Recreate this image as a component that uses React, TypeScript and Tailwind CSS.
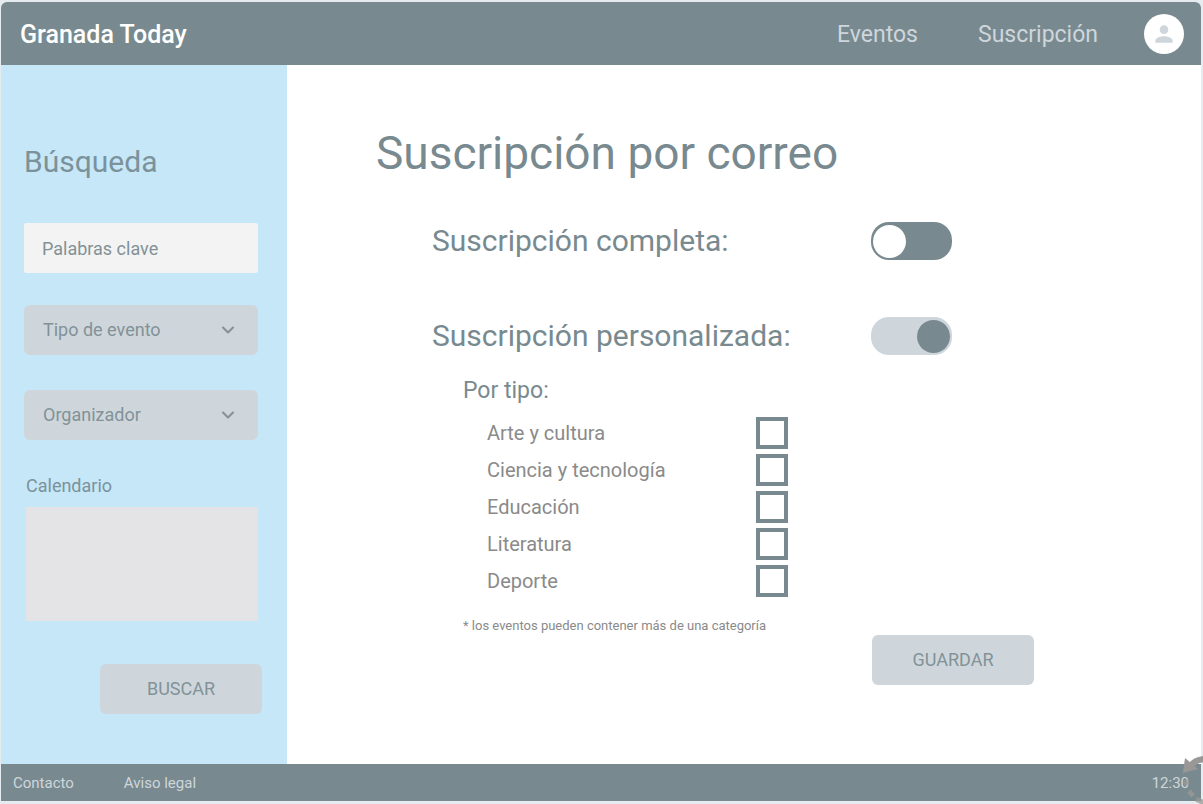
import { useState } from "react";
import { ChevronDown } from "lucide-react";
import { MdPerson } from "react-icons/md";

const categories = ["Arte y cultura", "Ciencia y tecnología", "Educación", "Literatura", "Deporte"];

function Dropdown({ label }: { label: string }) {
  return (
    <div className="grid items-center">
      <select
        aria-label={label}
        className="col-start-1 row-start-1 h-[50px] w-full appearance-none rounded-md bg-[#ced6dc] pr-12 pb-0.5 pl-[19px] text-[18px] text-[#829297]"
      >
        <option>{label}</option>
      </select>
      <ChevronDown
        strokeWidth={2.5}
        className="pointer-events-none col-start-1 row-start-1 mr-5 size-5 justify-self-end text-[#8b8f92]"
      />
    </div>
  );
}

function Toggle({ id, label, dark }: { id: string; label: string; dark: boolean }) {
  const [right, setRight] = useState(!dark);
  return (
    <div className="flex items-center">
      <label htmlFor={id} className="w-[439px] text-[30px] leading-[38px]">
        {label}
      </label>
      <button
        id={id}
        type="button"
        role="switch"
        aria-checked={right}
        onClick={() => setRight(!right)}
        className={
          "flex h-[38px] w-[81px] items-center rounded-[18px] px-0.5 " +
          (dark ? "bg-[#788a8f] " : "bg-[#ced6dc] ") +
          (right ? "justify-end" : "justify-start")
        }
      >
        <span className={"size-[33px] rounded-full " + (dark ? "bg-white" : "bg-[#788a8f]")} />
      </button>
    </div>
  );
}

export default function App() {
  return (
    <div className="relative flex min-h-screen flex-col overflow-hidden bg-[#e6ebef] pt-0.5 pr-0.5 pb-[3px] pl-px font-['Roboto',sans-serif] text-[#788a8f]">
      <header className="flex h-[63px] items-center rounded-t-md bg-[#788a8f] pr-[17px] pl-[19px]">
        <a href="#" className="mr-auto pt-0.5 text-[25px] leading-8 font-medium text-white">
          Granada Today
        </a>
        <nav className="flex gap-[60px] pt-0.5 text-[23px] leading-8 text-[#ced6dc]">
          <a href="#eventos">Eventos</a>
          <a href="#suscripcion">Suscripción</a>
        </nav>
        <button
          type="button"
          aria-label="Perfil"
          className="ml-[46px] flex size-10 items-center justify-center rounded-full bg-white"
        >
          <MdPerson className="size-[26px] text-[#ced6dc]" />
        </button>
      </header>

      <div className="flex flex-1">
        <aside className="w-[286px] shrink-0 bg-[#c6e7f8] pt-[77px] pr-[29px] pl-[23px]">
          <form className="flex flex-col" onSubmit={(e) => e.preventDefault()}>
            <h2 className="text-[30px] leading-10 text-[#7b929b]">Búsqueda</h2>
            <input
              type="text"
              aria-label="Palabras clave"
              placeholder="Palabras clave"
              className="mt-[41px] h-[50px] w-full rounded-xs bg-[#f3f3f3] px-[18px] text-[18px] placeholder:text-[#829297]"
            />
            <div className="mt-8 flex flex-col gap-[35px]">
              <Dropdown label="Tipo de evento" />
              <Dropdown label="Organizador" />
            </div>
            <h3 id="calendario" className="mt-[34px] ml-0.5 text-[18px] leading-6 text-[#7b929b]">
              Calendario
            </h3>
            <div role="group" aria-labelledby="calendario" className="mt-[9px] ml-0.5 h-[114px] bg-[#e4e4e7]" />
            <button
              type="submit"
              className="mt-[43px] -mr-1 h-[50px] w-[162px] self-end rounded-md bg-[#ced6dc] pb-0.5 text-[18px] text-[#829297]"
            >
              BUSCAR
            </button>
          </form>
        </aside>

        <main className="flex-1 bg-white pt-[60px] pl-[89px]">
          <h1 className="text-[46px] leading-[56px]">Suscripción por correo</h1>
          <form className="mt-[41px] ml-14" onSubmit={(e) => e.preventDefault()}>
            <div className="flex flex-col gap-[57px]">
              <Toggle id="completa" label="Suscripción completa:" dark />
              <Toggle id="personalizada" label="Suscripción personalizada:" dark={false} />
            </div>
            <fieldset className="mt-[22px] ml-[31px] w-[325px]">
              <legend className="text-[23px] leading-7">Por tipo:</legend>
              <div className="mt-3 ml-6 flex flex-col gap-[5px]">
                {categories.map((name) => (
                  <label key={name} className="flex items-center justify-between text-[20px] leading-8 text-[#8a8a8a]">
                    {name}
                    <input
                      type="checkbox"
                      className="size-8 appearance-none border-4 border-[#788a8f] bg-white checked:bg-[#788a8f]"
                    />
                  </label>
                ))}
              </div>
            </fieldset>
            <p className="mt-[21px] ml-[31px] text-[13px] leading-4 text-[#8a8a8a]">
              * los eventos pueden contener más de una categoría
            </p>
            <button
              type="submit"
              className="mt-px ml-[440px] h-[50px] w-[162px] rounded-md bg-[#ced6dc] pb-0.5 text-[18px] text-[#829297]"
            >
              GUARDAR
            </button>
          </form>
        </main>
      </div>

      <footer className="flex h-[37px] items-center bg-[#788a8f] px-3 pt-0.5 text-[15px] text-[#ced6dc]">
        <a href="#contacto">Contacto</a>
        <a href="#aviso-legal" className="ml-[50px]">
          Aviso legal
        </a>
        <time className="ml-auto">12:30</time>
      </footer>

      <svg
        aria-hidden="true"
        viewBox="0 0 24 52"
        className="pointer-events-none absolute right-0 bottom-0 h-[52px] w-6 fill-none stroke-[#9a9896]"
      >
        <path d="M25 7Q15 8 11 15" strokeWidth="6" />
        <path d="M6 6L4 21L19 17Z" className="fill-[#9a9896] stroke-none" />
        <path d="M6 28L8 33M10 39L14 44M17 47L25 51" strokeWidth="5" opacity="0.75" />
      </svg>
    </div>
  );
}
